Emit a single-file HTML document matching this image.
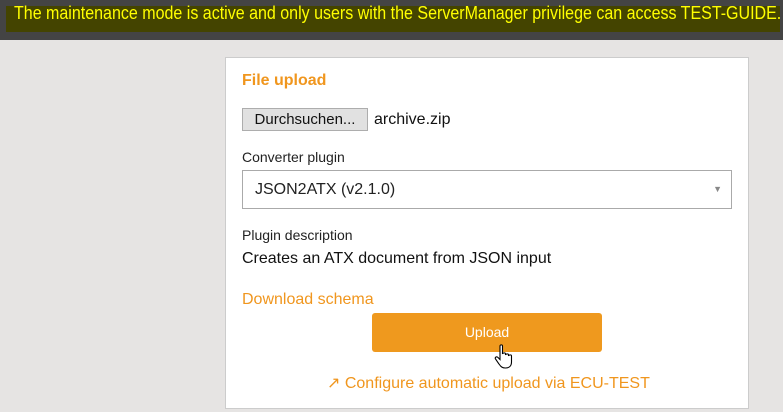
<!DOCTYPE html>
<html><head><style>
body{margin:0;width:783px;height:412px;background:#e6e4e3;font-family:"Liberation Sans",Arial,sans-serif;overflow:hidden;position:relative}
.top{position:absolute;left:0;top:0;width:783px;height:40px;background:#444}
.ban{position:absolute;left:6px;top:6px;width:774px;height:26px;background:#444400}
.bt{position:absolute;left:14px;top:3px;color:#ffff00;font-size:18px;line-height:20px;white-space:nowrap;transform:scaleX(0.89);transform-origin:0 0}
.card{position:absolute;left:225px;top:57px;width:524px;height:352px;background:#fff;border:1px solid #ccc;box-sizing:border-box}
.a{position:absolute;white-space:nowrap}
</style></head><body>
<div class="top"><div class="ban"></div><div class="bt">The maintenance mode is active and only users with the ServerManager privilege can access TEST-GUIDE.</div></div>
<div class="card"></div>
<div class="a" style="left:242px;top:72px;font-size:16px;font-weight:bold;color:#f0961e">File upload</div>
<div class="a" style="left:242px;top:108px;width:126px;height:23px;background:#e1e1e1;border:1px solid #adadad;box-sizing:border-box;font-size:15px;line-height:21px;text-align:center;color:#111">Durchsuchen...</div>
<div class="a" style="left:374px;top:111px;font-size:16px;color:#111">archive.zip</div>
<div class="a" style="left:242px;top:149px;font-size:14px;color:#222">Converter plugin</div>
<div class="a" style="left:242px;top:170px;width:490px;height:39px;border:1px solid #aaa;box-sizing:border-box;font-size:16px;line-height:37px;padding-left:12px;color:#222">JSON2ATX (v2.1.0)<span style="position:absolute;right:9px;top:0;font-size:9px;color:#888">▼</span></div>
<div class="a" style="left:242px;top:227px;font-size:14px;color:#222">Plugin description</div>
<div class="a" style="left:242px;top:250px;font-size:16px;color:#111">Creates an ATX document from JSON input</div>
<div class="a" style="left:242px;top:291px;font-size:16px;color:#f0961e">Download schema</div>
<div class="a" style="left:372px;top:313px;width:230px;height:39px;background:#ef991e;border-radius:3px;color:#fff;font-size:14px;line-height:39px;text-align:center">Upload</div>
<svg class="a" style="left:494px;top:344px" width="22" height="26" viewBox="0 0 22 26"><path d="M6 2 C6 0.5 8.5 0.5 8.5 2 V10 C9 8.5 11.5 8.5 11.5 10 V11 C12 9.5 14.5 9.5 14.5 11 V12 C15 10.5 17.5 10.5 17.5 12 V18 C17.5 22 15 24 11.5 24 C8.5 24 7 23 5 20 L1.5 15 C0.5 13.5 2.5 12 4 13.5 L6 15.5 Z" fill="#fff" stroke="#000" stroke-width="1.1"/></svg>
<div class="a" style="left:327px;top:373px;font-size:16px;color:#f0961e">↗ Configure automatic upload via ECU-TEST</div>
</body></html>
